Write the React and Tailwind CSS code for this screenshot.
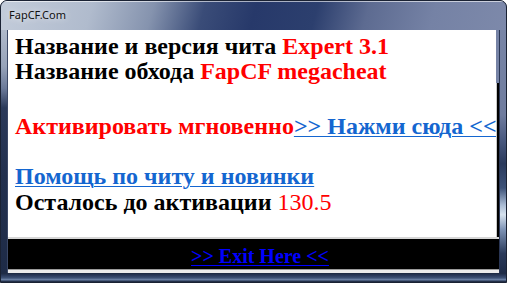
import React from "react";

export default function App() {
  return (
    <div className="w-[507px] h-[283px] overflow-hidden">
      <div className="w-[507px] h-[283px] flex flex-col rounded-t-[7px] border border-[#1a2233] overflow-hidden bg-[#22304d]">
        {/* Title bar */}
        <div className="h-[29px] shrink-0 flex items-start pl-[8px] pt-[7px] bg-[linear-gradient(105deg,#c3ccda_0%,#b0bbcd_18%,#8593ae_30%,#3a4c78_40%,#27396a_50%,#2c3f6e_62%,#5d6b91_72%,#7582a5_85%,#7d89aa_100%)] shadow-[inset_0_1px_0_rgba(255,255,255,0.6)]">
          <span className="text-[11px] leading-[14px] text-[#111] [font-family:'Noto_Sans',sans-serif] [text-shadow:0_0_6px_rgba(255,255,255,0.9)]">
            FapCF.Com
          </span>
        </div>
        {/* Middle row */}
        <div className="flex flex-1 min-h-0">
          <div className="w-[7px] shrink-0 bg-[linear-gradient(180deg,#b0bacb_0%,#97a3b9_15%,#6b7a99_24%,#2b3a5a_32%,#22304e_60%,#1e2b47_100%)] border-r border-[#3b4866]"></div>
          <div className="w-[491px] shrink-0 flex flex-col">
            <div className="h-[207px] shrink-0 flex">
              <div className="flex-1 min-w-0 bg-white overflow-hidden pl-[7px] pt-[4px] text-[24px] leading-[25px] font-bold whitespace-nowrap [font-family:'Liberation_Serif','Times_New_Roman',serif]">
                <div className="text-black">
                  Название и версия чита <span className="text-[#ff0000]">Expert 3.1</span>
                </div>
                <div className="text-black">
                  Название обхода <span className="text-[#ff0000]">FapCF megacheat</span>
                </div>
                <div className="mt-[30px]">
                  <span className="text-[#ff0000]">Активировать мгновенно</span>
                  <span className="text-[#1466d0] underline decoration-[1px] underline-offset-[2px]">&gt;&gt; Нажми сюда &lt;&lt;</span>
                </div>
                <div className="mt-[25px]">
                  <span className="text-[#1466d0] underline decoration-[1px] underline-offset-[2px]">Помощь по читу и новинки</span>
                </div>
                <div className="mt-[1px] text-black">
                  Осталось до активации <span className="text-[#ff0000] font-normal">130.5</span>
                </div>
              </div>
              <div className="w-[3px] shrink-0 flex flex-col">
                <div className="h-[53px] shrink-0 bg-[#7683a5]"></div>
                <div className="flex-1 bg-black border-l border-[#c8c8c8]"></div>
              </div>
            </div>
            <div className="h-[2px] shrink-0 bg-[#d6d6d6]"></div>
            <div className="h-[30px] shrink-0 bg-black flex items-center justify-center pl-[13px] pt-[3px]">
              <span className="text-[20px] leading-[22px] font-bold text-[#0000ff] underline decoration-[1px] underline-offset-[2px] [font-family:'Liberation_Serif','Times_New_Roman',serif]">
                &gt;&gt; Exit Here &lt;&lt;
              </span>
            </div>
            <div className="h-[4px] shrink-0 bg-[#ececec] border-t border-[#9a9a9a]"></div>
          </div>
          <div className="flex-1 bg-[linear-gradient(180deg,#7885a6_0%,#6f7c9e_35%,#4a5a80_45%,#2a3a5c_55%,#3d5278_65%,#a9bbd4_72%,#d6e2ee_76%,#7f94b6_82%,#2a3a5a_92%,#1e2b47_100%)] border-l border-[#2a3654]"></div>
        </div>
        {/* Bottom border */}
        <div className="h-[9px] shrink-0 bg-[linear-gradient(180deg,#1c2840_0%,#2c3c5e_30%,#3e5276_55%,#6f84a8_75%,#2a3a58_90%,#1a2233_100%)]"></div>
      </div>
    </div>
  );
}
